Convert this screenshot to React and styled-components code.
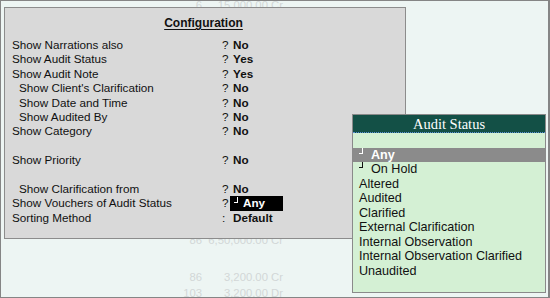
import React from 'react';
import styled, { createGlobalStyle } from 'styled-components';

const GlobalStyle = createGlobalStyle`
  body {
    margin: 0;
    font-family: 'Liberation Sans', Arial, sans-serif;
  }
`;

const Frame = styled.div`
  position: relative;
  width: 550px;
  height: 298px;
  box-sizing: border-box;
  border: 1px solid #858585;
  border-right-width: 2px;
  background: #edf5f3;
  overflow: hidden;
`;

const Ledger = styled.div`
  display: flex;
  flex-direction: column;
  font-size: 11.3px;
  color: #d2d7d7;
`;

const LedgerRow = styled.div`
  display: grid;
  grid-template-columns: 201px 78px;
  column-gap: 3px;
  line-height: 14px;
  margin-top: ${(p) => p.$top}px;
`;

const LedgerNum = styled.span`
  text-align: right;
`;

const LedgerAmount = styled.span`
  text-align: right;
`;

const Panel = styled.div`
  position: absolute;
  left: 3px;
  top: 6px;
  width: 402px;
  height: 232px;
  box-sizing: border-box;
  background: #d9d9d9;
  border: 1px solid #8c8c8c;
  padding: 8px 0 0 7px;
  color: #111;
`;

const PanelTitle = styled.div`
  width: 100%;
  text-align: center;
  padding-right: 10px;
  box-sizing: border-box;
  font-size: 12px;
  font-weight: bold;
  line-height: 14px;
  margin-bottom: 8px;

  span {
    text-decoration: underline;
    text-underline-offset: 2px;
  }
`;

const Row = styled.div`
  display: grid;
  grid-template-columns: 210px 11px auto;
  height: 14.4px;
  line-height: 14.4px;
  font-size: 11.7px;
  white-space: nowrap;
`;

const Label = styled.span`
  padding-left: ${(p) => (p.$indent ? 7 : 0)}px;
`;

const Marker = styled.span``;

const Value = styled.span`
  font-weight: bold;
`;

const SelectedValue = styled.span`
  justify-self: start;
  display: flex;
  align-items: center;
  margin-left: -3px;
  padding-left: 4px;
  width: 53px;
  box-sizing: border-box;
  height: 14.4px;
  background: #000;
  color: #fff;
  font-weight: bold;
`;

const Tick = styled.span`
  display: inline-block;
  width: 3px;
  height: 5px;
  border-right: 1px solid currentColor;
  border-bottom: 1px solid currentColor;
  margin-right: 5px;
  align-self: flex-start;
  margin-top: 1px;
`;

const Popup = styled.div`
  position: absolute;
  left: 351px;
  top: 113px;
  width: 194px;
  height: 179px;
  box-sizing: border-box;
  border: 1px solid #8a8a8a;
  background: #d4f0d4;
  display: flex;
  flex-direction: column;
`;

const PopupTitle = styled.div`
  height: 17px;
  background: #135046;
  border-bottom: 1px dotted #5a8fd6;
  color: #fff;
  font-family: 'Liberation Serif', 'Times New Roman', serif;
  font-size: 14.5px;
  line-height: 18px;
  text-align: center;
`;

const PopupList = styled.div`
  display: flex;
  flex-direction: column;
  padding-top: 15px;
`;

const Item = styled.div`
  display: flex;
  align-items: center;
  height: ${(p) => (p.$active ? 14 : 14.5)}px;
  padding-left: 6px;
  font-size: 12.6px;
  background: ${(p) => (p.$active ? '#8b8b8b' : 'transparent')};
  color: ${(p) => (p.$active ? '#fff' : '#111')};
  font-weight: ${(p) => (p.$active ? 'bold' : 'normal')};
  white-space: nowrap;
`;

const ItemTick = styled(Tick)`
  margin-right: 8px;
  margin-top: 0;
`;

const rows = [
  { label: 'Show Narrations also', value: 'No' },
  { label: 'Show Audit Status', value: 'Yes' },
  { label: 'Show Audit Note', value: 'Yes' },
  { label: "Show Client's Clarification", value: 'No', indent: true },
  { label: 'Show Date and Time', value: 'No', indent: true },
  { label: 'Show Audited By', value: 'No', indent: true },
  { label: 'Show Category', value: 'No' },
  null,
  { label: 'Show Priority', value: 'No' },
  null,
  { label: 'Show Clarification from', value: 'No', indent: true },
  { label: 'Show Vouchers of Audit Status', value: 'Any', selected: true },
  { label: 'Sorting Method', value: 'Default', marker: ':' },
];

const statuses = [
  { name: 'Any', active: true, tick: true },
  { name: 'On Hold', tick: true },
  { name: 'Altered' },
  { name: 'Audited' },
  { name: 'Clarified' },
  { name: 'External Clarification' },
  { name: 'Internal Observation' },
  { name: 'Internal Observation Clarified' },
  { name: 'Unaudited' },
];

const ledger = [
  { top: -3, num: '6', amount: '15,000.00 Cr' },
  { top: 221, num: '86', amount: '6,50,000.00 Cr' },
  { top: 23, num: '86', amount: '3,200.00 Cr' },
  { top: 2, num: '103', amount: '3,200.00 Dr' },
];

const App = () => {
  return (
    <>
      <GlobalStyle />
      <Frame>
        <Ledger>
          {ledger.map((r, i) => (
            <LedgerRow key={i} $top={r.top}>
              <LedgerNum>{r.num}</LedgerNum>
              <LedgerAmount>{r.amount}</LedgerAmount>
            </LedgerRow>
          ))}
        </Ledger>

        <Panel>
          <PanelTitle>
            <span>Configuration</span>
          </PanelTitle>
          {rows.map((r, i) =>
            r ? (
              <Row key={i}>
                <Label $indent={r.indent}>{r.label}</Label>
                <Marker>{r.marker || '?'}</Marker>
                {r.selected ? (
                  <SelectedValue>
                    <Tick />
                    {r.value}
                  </SelectedValue>
                ) : (
                  <Value>{r.value}</Value>
                )}
              </Row>
            ) : (
              <Row key={i} />
            )
          )}
        </Panel>

        <Popup>
          <PopupTitle>Audit Status</PopupTitle>
          <PopupList>
            {statuses.map((s) => (
              <Item key={s.name} $active={s.active}>
                {s.tick && <ItemTick />}
                {s.name}
              </Item>
            ))}
          </PopupList>
        </Popup>
      </Frame>
    </>
  );
};

export default App;
